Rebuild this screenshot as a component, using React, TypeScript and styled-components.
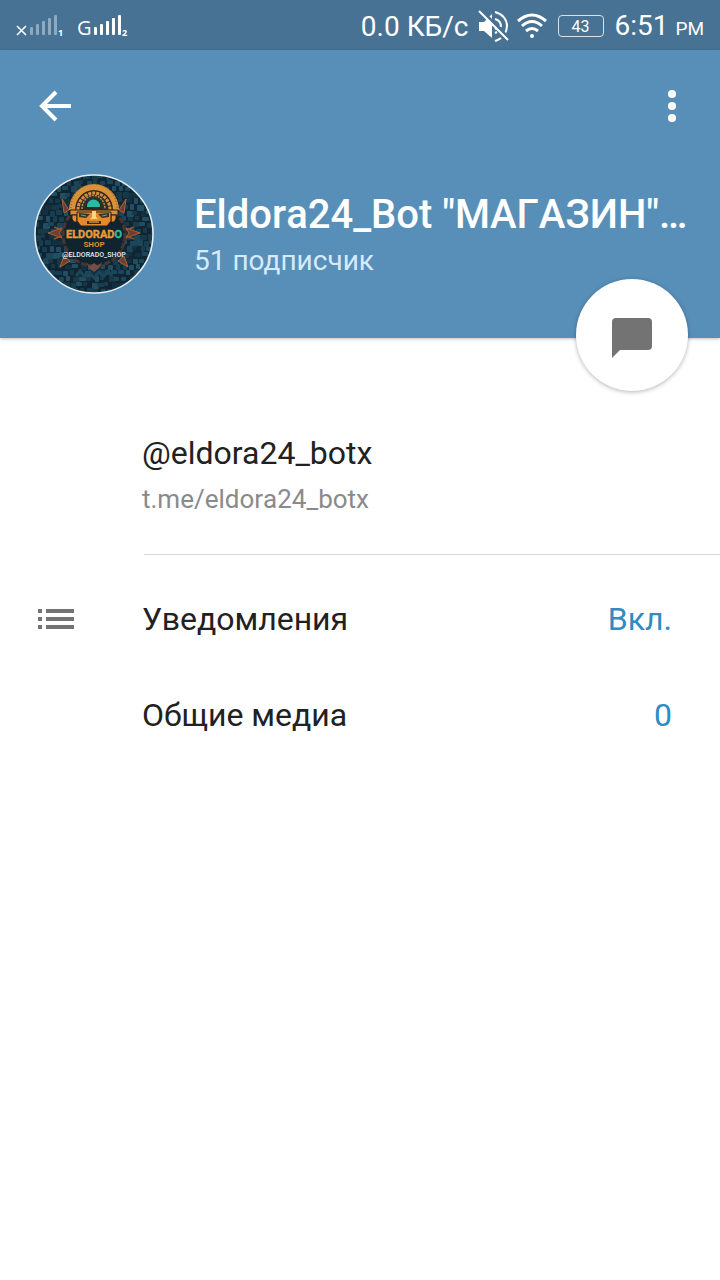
import React from 'react';
import styled, { createGlobalStyle } from 'styled-components';

const GlobalStyle = createGlobalStyle`
  * { box-sizing: border-box; }
  body {
    margin: 0;
    background: #fff;
    font-family: Roboto, "Noto Sans", sans-serif;
    color: #212121;
  }
`;

const StatusBar = styled.div`
  display: flex;
  align-items: center;
  justify-content: space-between;
  height: 50px;
  padding: 2px 16px 0;
  background: #477294;
  color: #fff;
`;

const StatusGroup = styled.div`
  display: flex;
  align-items: center;
  gap: 8px;
`;

const SignalGroup = styled(StatusGroup)`
  gap: 12px;
`;

const StatusText = styled.span`
  padding-top: 2px;
  font-size: 28px;
  line-height: 32px;
  white-space: pre;
`;

const Meridiem = styled.small`
  font-size: 19px;
`;

const MutedArt = styled.svg`
  margin: 0 -2px 0 2px;
`;

const Battery = styled.span`
  width: 46px;
  height: 22px;
  margin: 0 2px;
  border: 1px solid #d5e2ec;
  border-radius: 4px;
  font-size: 16px;
  line-height: 22px;
  text-align: center;
  padding-right: 2px;
`;

const Header = styled.header`
  position: relative;
  padding-bottom: 44px;
  background: #588fb9;
  color: #fff;
  box-shadow: 0 1px 3px rgba(0, 0, 0, 0.25);
`;

const Toolbar = styled.div`
  display: flex;
  align-items: center;
  justify-content: space-between;
  height: 112px;
  padding: 0 24px 0 31px;
`;

const IconButton = styled.button`
  display: flex;
  padding: 0;
  border: 0;
  background: none;
  color: inherit;
  cursor: pointer;
`;

const Profile = styled.div`
  display: flex;
  gap: 40px;
  padding: 12px 24px 0 34px;
`;

const AvatarArt = styled.svg`
  flex: none;
`;

const ProfileText = styled.div`
  flex: 1;
  min-width: 0;
  padding-top: 17px;
`;

const Title = styled.h1`
  margin: 0;
  font-size: 40px;
  font-weight: 500;
  font-kerning: none;
  line-height: 48px;
  white-space: nowrap;
`;

const Subscribers = styled.p`
  margin: 4px 0 0;
  font-size: 28px;
  line-height: 36px;
  color: #d7eafa;
`;

const MessageButton = styled(IconButton)`
  position: absolute;
  right: 32px;
  bottom: -53px;
  width: 112px;
  height: 112px;
  padding-top: 6px;
  align-items: center;
  justify-content: center;
  border-radius: 50%;
  background: #fff;
  color: #737373;
  box-shadow: 0 1px 4px rgba(0, 0, 0, 0.3);
`;

const Username = styled.section`
  margin-left: 144px;
  padding: 93px 0 33px;
  border-bottom: 1px solid #d9d9d9;
`;

const Handle = styled.p`
  margin: 0 0 2px -2px;
  font-size: 32px;
  line-height: 44px;
`;

const Link = styled.a`
  display: block;
  margin-left: -2px;
  font-size: 26px;
  font-kerning: none;
  line-height: 44px;
  color: #8a8a8a;
  text-decoration: none;
`;

const Settings = styled.ul`
  margin: 0;
  padding: 16px 0;
  list-style: none;
`;

const SettingButton = styled.button`
  display: grid;
  grid-template-columns: 104px 1fr auto;
  align-items: center;
  width: 100%;
  height: 96px;
  padding: 0 48px 0 38px;
  border: 0;
  background: none;
  font: inherit;
  font-size: 32px;
  color: inherit;
  text-align: left;
  cursor: pointer;
`;

const Label = styled.span`
  grid-column: 2;
`;

const Value = styled.span`
  color: #2f8bc4;
`;

const BAR_HEIGHTS = [8, 11, 14, 17, 20];

function Signal({ network, slot, faded }: { network: 'none' | 'G'; slot: string; faded?: boolean }) {
  const start = network === 'G' ? 16 : 14;
  return (
    <svg width="50" height="28" viewBox="0 0 50 28" aria-hidden="true">
      {network === 'G' ? (
        <text x="-1" y="23" fontFamily="Open Sans" fontSize="20" fill="#fff">G</text>
      ) : (
        <path d="M1 14l9 9M10 14l-9 9" stroke="#fff" strokeWidth="1.6" />
      )}
      {BAR_HEIGHTS.map((h, i) => (
        <rect key={h} x={start + i * 6} y={23 - h} width="3" height={h} rx="1" fill={faded ? '#8eaac0' : '#fff'} />
      ))}
      <text x={start + 28} y="24" fontFamily="Open Sans" fontWeight="700" fontSize="9" fill="#fff">{slot}</text>
    </svg>
  );
}

function MutedIcon() {
  return (
    <MutedArt width="32" height="32" viewBox="0 0 32 32" fill="none" aria-hidden="true">
      <path d="M1 12h5l8-8v24l-8-7H1z" fill="#fff" />
      <path d="M17 2c8 2 12 8 12 14 0 4-1 6-3 9M23 28c-2 2-4 2-6 3M17 9c4 1 6 4 6 8M17 14c2 1 2 4 0 5M17 23l2-1" stroke="#fff" strokeWidth="2" />
      <path d="M3 0l29 29" stroke="#477294" strokeWidth="3" />
      <path d="M1 1l29 29" stroke="#fff" strokeWidth="2" />
    </MutedArt>
  );
}

function WifiIcon() {
  return (
    <svg width="32" height="28" viewBox="0 0 32 28" fill="none" stroke="#fff" strokeWidth="3" aria-hidden="true">
      <path d="M2 9q14-12 28 0M6 14q10-9 20 0M10 19q6-5 12 0" />
      <circle cx="16" cy="24" r="2" fill="#fff" stroke="none" />
    </svg>
  );
}

const TILES = Array.from({ length: 340 }, (_, i) => {
  const col = i % 17;
  const row = Math.floor(i / 17);
  const seed = (i * 37 + row * 53 + col * col * 11) % 29;
  return {
    x: col * 7 + (row % 2) * 3 + (seed % 3),
    y: row * 6 + (seed % 2),
    w: 4 + (seed % 4),
    h: 4 + (seed % 3),
    fill: ['#173d50', '#1b4659', '#12303f', '#234d60', '#183846'][seed % 5],
  };
});

function Avatar() {
  return (
    <AvatarArt width="120" height="120" viewBox="0 0 120 120" role="img" aria-label="Eldorado Shop">
      <defs>
        <clipPath id="disc"><circle cx="60" cy="60" r="59" /></clipPath>
      </defs>
      <g clipPath="url(#disc)">
        <rect width="120" height="120" fill="#0f2533" />
        {TILES.map((t, i) => (
          <rect key={i} x={t.x} y={t.y} width={t.w} height={t.h} rx="1" fill={t.fill} />
        ))}
        <circle cx="60" cy="61" r="31" fill="#10242f" stroke="#4a3430" strokeWidth="3" strokeDasharray="6 2" />
        <g fill="#6e3e2e" stroke="#a76339" strokeWidth="1">
          <path d="M14 59l14-5-3 5 3 5zM106 59l-14-5 3 5-3 5zM28 25l7 11-5 3zM92 25l-7 11 5 3zM26 93l4-11 6 5zM94 93l-4-11-6 5z" />
        </g>
        <path d="M20 53l8 3M20 65l8-3M100 53l-8 3M100 65l-8-3" stroke="#98502f" strokeWidth="1.5" />
        <path d="M52 88l4 4 4-3 4 3 4-4-3 6-5 4-5-4z" fill="#754d49" />
        <path d="M42 102l4-5 4 5 5-4 5 6 5-6 5 4 4-5 4 5" fill="none" stroke="#1b4658" strokeWidth="3" />

        <path d="M35 36a25 26 0 0 1 50 0z" fill="#d99138" />
        <path d="M37 34a23 24 0 0 1 46 0" fill="none" stroke="#79501f" strokeWidth="1" strokeDasharray="1 2" />
        <path d="M41 36a19 20 0 0 1 38 0z" fill="#33281f" />
        <path d="M44 36a16 17 0 0 1 32 0" fill="none" stroke="#d99138" strokeWidth="3" strokeDasharray="3 1" />
        <path d="M47 36a13 14 0 0 1 26 0z" fill="#27332f" />
        <path d="M48 35a11 13 0 0 1 23 0" fill="none" stroke="#c68b42" strokeWidth="1.5" strokeDasharray="2 1" />
        <path d="M51 35v-3a9 10 0 0 1 17 0v3z" fill="#2d2a20" />
        <path d="M53 32a6.500 6.500 0 0 1 13 0v1H53z" fill="#2bbba2" />

        <path d="M36 36h48v5H36z" fill="#d99138" stroke="#2d2118" strokeWidth="1" />
        <path d="M38 41h5v7h-3l-2-3zM77 41h5v4l-2 3h-3z" fill="#d99138" stroke="#2d2118" strokeWidth="1" />
        <path d="M43 38h34v9l-4 5H47l-4-5z" fill="#e48a2d" stroke="#2d2118" strokeWidth="1" />
        <path d="M45 39l11 1-4 4-7-1zM75 39l-11 1 4 4 7-1z" fill="#3b321f" />
        <path d="M47 41l5 1M73 41l-5 1" stroke="#42b59a" strokeWidth="1" />
        <path d="M58 37h4v6l2 2h-8l2-2z" fill="#ffd47e" />
        <path d="M53 47h14v3H53z" fill="#452716" />
        <path d="M55 48h10" stroke="#f6c77a" strokeWidth="1" />
      </g>
      <g fontFamily="Roboto, sans-serif" fontWeight="700" textAnchor="middle">
        <text x="60" y="64" fontSize="11" fill="#e99a35" stroke="#e99a35" strokeWidth="0.4">ELDORAD<tspan fill="#2bbba2" stroke="#2bbba2">O</tspan></text>
        <text x="60" y="73" fontSize="8" fill="#dd8e34">SHOP</text>
        <text x="60" y="83" fontSize="7" fontWeight="500" fill="#e6ecec">@ELDORADO_SHOP</text>
      </g>
      <circle cx="60" cy="60" r="59" fill="none" stroke="#e4edf1" strokeWidth="1.6" />
    </AvatarArt>
  );
}

function ListIcon() {
  return (
    <svg width="36" height="20" viewBox="0 0 36 20" fill="#737373" aria-hidden="true">
      <path d="M0 0h4v4H0zM8 0h28v4H8zM0 8h4v4H0zM8 8h28v4H8zM0 16h4v4H0zM8 16h28v4H8z" />
    </svg>
  );
}

export default function App() {
  return (
    <>
      <GlobalStyle />
      <StatusBar>
        <SignalGroup>
          <Signal network="none" slot="1" faded />
          <Signal network="G" slot="2" />
        </SignalGroup>
        <StatusGroup>
          <StatusText>0.0 КБ/с</StatusText>
          <MutedIcon />
          <WifiIcon />
          <Battery>43</Battery>
          <StatusText>6:51 <Meridiem>PM</Meridiem></StatusText>
        </StatusGroup>
      </StatusBar>
      <Header>
        <Toolbar>
          <IconButton aria-label="Назад">
            <svg width="48" height="48" viewBox="0 0 48 48" fill="none" stroke="#fff" strokeWidth="4">
              <path d="M40 24H11M25 10L11 24l14 14" />
            </svg>
          </IconButton>
          <IconButton aria-label="Меню">
            <svg width="48" height="48" viewBox="0 0 48 48" fill="#fff">
              <circle cx="24" cy="12" r="4" />
              <circle cx="24" cy="24" r="4" />
              <circle cx="24" cy="36" r="4" />
            </svg>
          </IconButton>
        </Toolbar>
        <Profile>
          <Avatar />
          <ProfileText>
            <Title>Eldora24_Bot "МАГАЗИН"…</Title>
            <Subscribers>51 подписчик</Subscribers>
          </ProfileText>
        </Profile>
        <MessageButton aria-label="Написать">
          <svg width="40" height="40" viewBox="0 0 40 40" fill="currentColor">
            <path d="M4 0h32a4 4 0 0 1 4 4v24a4 4 0 0 1-4 4H8l-8 8V4a4 4 0 0 1 4-4z" />
          </svg>
        </MessageButton>
      </Header>
      <main>
        <Username>
          <Handle>@eldora24_botx</Handle>
          <Link href="#username">t.me/eldora24_botx</Link>
        </Username>
        <Settings>
          <li>
            <SettingButton>
              <ListIcon />
              <Label>Уведомления</Label>
              <Value>Вкл.</Value>
            </SettingButton>
          </li>
          <li>
            <SettingButton>
              <Label>Общие медиа</Label>
              <Value>0</Value>
            </SettingButton>
          </li>
        </Settings>
      </main>
    </>
  );
}
